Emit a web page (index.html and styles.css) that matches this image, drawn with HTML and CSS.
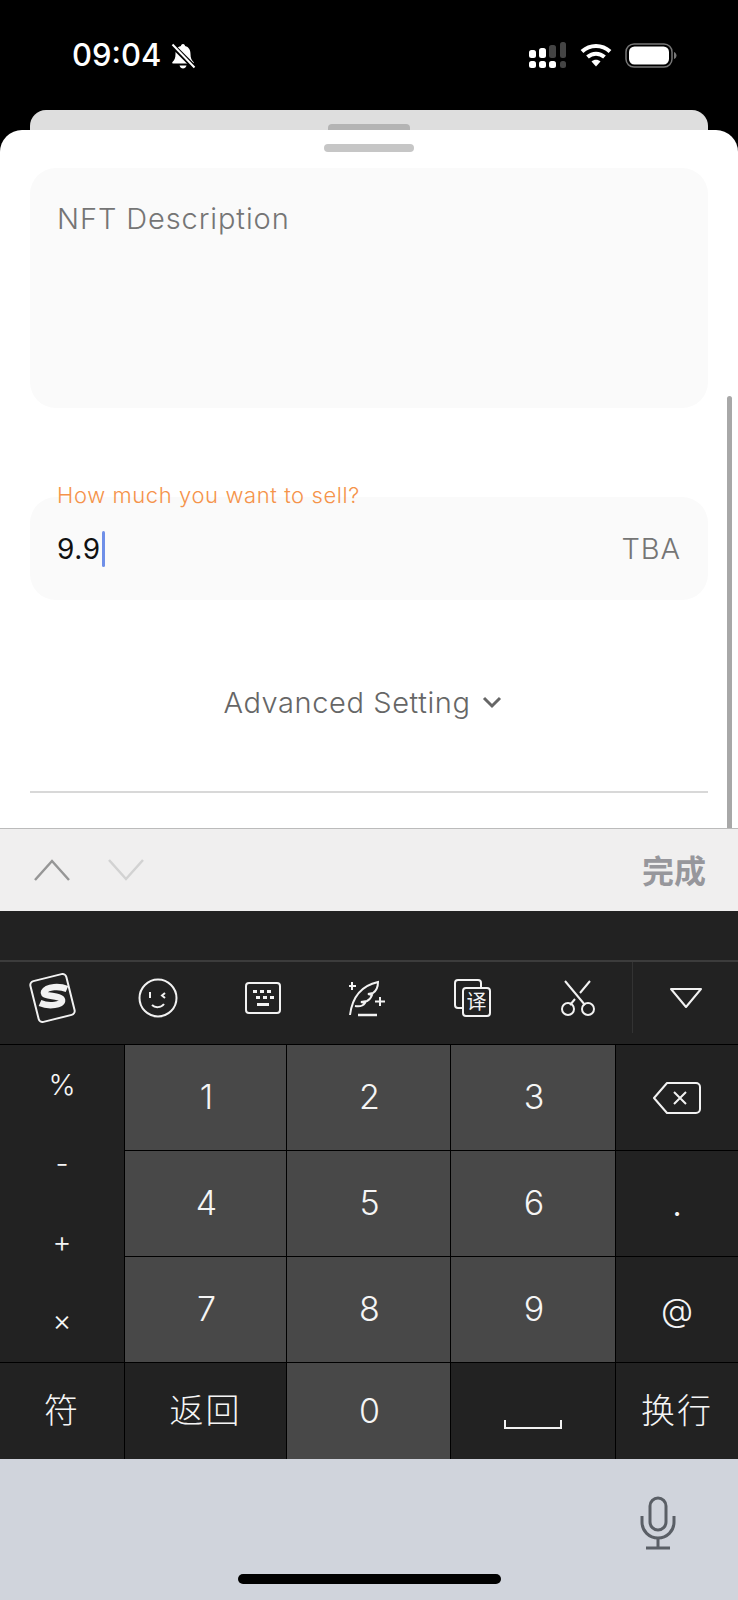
FILE: index.html
```html
<!DOCTYPE html>
<html lang="en">
<head>
    <meta charset="UTF-8">
    <meta name="viewport" content="width=device-width, initial-scale=1.0">
    <title>Create NFT</title>
    <link rel="stylesheet" href="styles.css">
</head>
<body>
    <div class="status-bar">
        <span class="time">09:04</span>
        <svg class="bell" width="26" height="26" viewBox="0 0 26 26">
            <path d="M13 1c-1.400 0-2 1-2 2-4 1-5.500 4-5.500 8 0 4-1 6-3 8-.6.8-.2 1.500.8 1.500h19.400c1-.1 1.400-.8.800-1.500-2-2-3-4-3-8 0-4-1.500-7-5.500-8 0-1-.6-2-2-2z" fill="#fff"/>
            <path d="M9.500 22.500c.5 2 2 3 3.500 3s3-1 3.500-3z" fill="#fff"/>
            <path d="M1.500 1.500l23 23" stroke="#000" stroke-width="5"/>
            <path d="M2.500 1.500l22 23" stroke="#fff" stroke-width="2"/>
        </svg>
        <div class="status-icons">
            <svg width="38" height="27" viewBox="0 0 38 27">
                <rect x="0" y="8" width="7" height="8" rx="2.500" fill="#fff"/>
                <rect x="10" y="6" width="7" height="10" rx="2.500" fill="#fff"/>
                <rect x="20" y="3" width="7" height="13" rx="2.500" fill="#444"/>
                <rect x="31" y="0" width="6" height="16" rx="2.500" fill="#444"/>
                <rect x="0" y="19" width="7" height="7" rx="2.500" fill="#fff"/>
                <rect x="10" y="19" width="7" height="7" rx="2.500" fill="#fff"/>
                <rect x="20" y="19" width="7" height="7" rx="2.500" fill="#fff"/>
                <rect x="31" y="19" width="6" height="7" rx="2.500" fill="#444"/>
            </svg>
            <svg width="32" height="24" viewBox="0 0 32 24">
                <path d="M2 8.500c8-7.500 20-7.500 28 0" fill="none" stroke="#fff" stroke-width="4"/>
                <path d="M7.500 14c5-4.500 12-4.500 17 0" fill="none" stroke="#fff" stroke-width="4"/>
                <path d="M11.500 18.500c2.500-2.500 6.500-2.500 9 0L16 23.500z" fill="#fff"/>
            </svg>
            <svg width="52" height="25" viewBox="0 0 52 25">
                <rect x="1" y="1" width="46" height="23" rx="8" fill="none" stroke="#777" stroke-width="1.500"/>
                <rect x="4" y="3.500" width="40" height="18" rx="5.500" fill="#fff"/>
                <path d="M49 9c1.500.5 2.500 2 2.500 3.500S50.500 15.500 49 16z" fill="#777"/>
            </svg>
        </div>
    </div>

    <div class="back-sheet"><div class="back-handle"></div></div>

    <div class="sheet">
        <div class="handle"></div>
        <div class="field description">NFT Description</div>
        <div class="field amount">
            <label class="float-label">How much you want to sell?</label>
            <span class="amount-value">9.9</span><span class="caret"></span>
            <span class="unit">TBA</span>
        </div>
        <div class="advanced">
            Advanced Setting
            <svg width="20" height="14" viewBox="0 0 20 14"><path d="M2 3l8 8 8-8" fill="none" stroke="#666" stroke-width="3"/></svg>
        </div>
        <div class="divider"></div>
        <div class="scrollbar"></div>
    </div>

    <div class="accessory">
        <svg width="36" height="22" viewBox="0 0 36 22"><path d="M1 21L18 2l17 19" fill="none" stroke="#969696" stroke-width="2.500"/></svg>
        <svg class="next" width="36" height="22" viewBox="0 0 36 22"><path d="M1 1l17 19L35 1" fill="none" stroke="#d2d2d2" stroke-width="2.500"/></svg>
        <span class="done">完成</span>
    </div>

    <div class="keyboard">
        <div class="candidates"></div>
        <div class="toolbar">
            <div class="tool">
                <svg width="52" height="50" viewBox="0 0 52 50">
                    <rect x="7" y="4" width="37" height="42" rx="4" transform="rotate(-14 25.500 25)" fill="none" stroke="#f2f2f2" stroke-width="2"/>
                    <path d="M40 16c-7-3-20-3-23 3-2 5 17 3 18 8 1 5-13 7-22 3" fill="none" stroke="#f2f2f2" stroke-width="6.500"/>
                </svg>
            </div>
            <div class="tool">
                <svg width="40" height="40" viewBox="0 0 40 40" fill="none" stroke="#f2f2f2" stroke-width="2">
                    <circle cx="20" cy="20" r="18.500"/>
                    <path d="M12 14v6M27 15l-3 2.500 3 2.500"/>
                    <path d="M14 27c3 3 9 3 12-1"/>
                </svg>
            </div>
            <div class="tool">
                <svg width="36" height="32" viewBox="0 0 36 32">
                    <rect x="1" y="1" width="34" height="30" rx="3" fill="none" stroke="#f2f2f2" stroke-width="2"/>
                    <path d="M8 8h4v3H8zM15 8h4v3h-4zM22 8h4v3h-4zM11 14h4v3h-4zM18 14h4v3h-4zM25 14h4v3h-4zM12 21h12v3H12z" fill="#f2f2f2"/>
                </svg>
            </div>
            <div class="tool">
                <svg width="38" height="38" viewBox="0 0 38 38" fill="none" stroke="#f2f2f2" stroke-width="2">
                    <path d="M1 36C3 20 11 7 29 3c0 6-2 9-5 11l-5 1 4 1c-1 3-3 5-5 6l-6 1 4 1c-2 3-5 4-10 3"/>
                    <path d="M9 36h19" stroke-width="2.500"/>
                    <path d="M3 3v8M-1 7h8M31 18v9M26 22.500h10"/>
                </svg>
            </div>
            <div class="tool">
                <svg width="38" height="38" viewBox="0 0 38 38" fill="none" stroke="#f2f2f2" stroke-width="2">
                    <path d="M8 29H4a3 3 0 0 1-3-3V4a3 3 0 0 1 3-3h20a3 3 0 0 1 3 3v4"/>
                    <rect x="9" y="9" width="27" height="28" rx="3"/>
                    <text class="tool-char" x="22.500" y="30">译</text>
                </svg>
            </div>
            <div class="tool">
                <svg width="36" height="36" viewBox="0 0 36 36" fill="none" stroke="#f2f2f2" stroke-width="2">
                    <path d="M5 1l20 24M30 1L20 13M15 19l-5 6"/>
                    <circle cx="8" cy="29" r="6"/>
                    <circle cx="28" cy="29" r="6"/>
                </svg>
            </div>
            <div class="tool last">
                <svg width="36" height="22" viewBox="0 0 36 22"><path d="M3 2h30L18 20z" fill="none" stroke="#f2f2f2" stroke-width="2" stroke-linejoin="round"/></svg>
            </div>
        </div>

        <div class="keys">
            <div class="key symbols">
                <span class="sym">%</span>
                <span class="sym">-</span>
                <span class="sym">+</span>
                <span class="sym">×</span>
            </div>
            <div class="key num">1</div>
            <div class="key num">2</div>
            <div class="key num">3</div>
            <div class="key dark">
                <svg width="48" height="32" viewBox="0 0 48 32" fill="none" stroke="#f2f2f2" stroke-width="2">
                    <path d="M14 1h29a4 4 0 0 1 4 4v22a4 4 0 0 1-4 4H14L1 16z" stroke-linejoin="round"/>
                    <path d="M21 10l12 12M33 10L21 22"/>
                </svg>
            </div>
            <div class="key num">4</div>
            <div class="key num">5</div>
            <div class="key num">6</div>
            <div class="key dark dot">.</div>
            <div class="key num">7</div>
            <div class="key num">8</div>
            <div class="key num">9</div>
            <div class="key dark at">@</div>
            <div class="key dark cjk">符</div>
            <div class="key dark cjk">返回</div>
            <div class="key num">0</div>
            <div class="key dark space">
                <svg width="58" height="10" viewBox="0 0 58 10"><path d="M1 0v8h56V0" fill="none" stroke="#f2f2f2" stroke-width="2"/></svg>
            </div>
            <div class="key dark cjk">换行</div>
        </div>
    </div>

    <div class="bottom-bar">
        <svg class="mic" width="36" height="54" viewBox="0 0 36 54" fill="none" stroke="#5a5f66" stroke-width="3">
            <rect x="10" y="2" width="16" height="32" rx="8"/>
            <path d="M2 20v6c0 9 7 16 16 16s16-7 16-16v-6"/>
            <path d="M18 42v9M6 52h24"/>
        </svg>
        <div class="home-indicator"></div>
    </div>
</body>
</html>
```

FILE: styles.css
```css
body {
    margin: 0;
    width: 738px;
    height: 1600px;
    overflow: hidden;
    background-color: #000;
    font-family: Inter, 'Noto Sans CJK SC', sans-serif;
}

/* status bar */
.status-bar {
    display: flex;
    align-items: center;
    height: 110px;
    padding: 0 61px 0 72px;
    box-sizing: border-box;
    color: white;
}

.time {
    font-size: 31px;
    font-weight: 500;
    margin-top: -2px;
}

.bell {
    margin-left: 9px;
    margin-top: 2px;
}

.status-icons {
    display: flex;
    align-items: center;
    gap: 13px;
    margin-left: auto;
}

/* sheets */
.back-sheet {
    height: 20px;
    margin: 0 30px;
    background: #dedede;
    border-radius: 16px 16px 0 0;
    display: flex;
    justify-content: center;
    align-items: flex-end;
}

.back-handle {
    width: 82px;
    height: 6px;
    background: #b4b4b4;
    border-radius: 4px 4px 0 0;
}

.sheet {
    position: relative;
    height: 698px;
    padding: 14px 30px 0;
    box-sizing: border-box;
    background: white;
    border-radius: 22px 22px 0 0;
    overflow: hidden;
}

.handle {
    width: 90px;
    height: 8px;
    margin: 0 auto 16px;
    background: #c6c6c6;
    border-radius: 4px;
}

.field {
    background: #fafafa;
    border-radius: 26px;
    color: #757575;
    font-size: 29px;
    font-weight: 300;
    letter-spacing: 0.9px;
}

.description {
    height: 240px;
    padding: 33px 27px;
    box-sizing: border-box;
    line-height: 36px;
}

.amount {
    position: relative;
    display: flex;
    align-items: center;
    height: 103px;
    margin-top: 89px;
    padding: 0 27px;
    box-sizing: border-box;
}

.float-label {
    position: absolute;
    left: 27px;
    top: -16px;
    color: #f5934a;
    font-size: 22px;
    letter-spacing: 0.6px;
    line-height: 28px;
}

.amount-value {
    color: #111;
    font-size: 28px;
    font-weight: 400;
    letter-spacing: 0.6px;
}

.caret {
    width: 3px;
    height: 36px;
    margin-left: 1px;
    background: #6f8fe8;
    border-radius: 2px;
}

.unit {
    margin-left: auto;
}

.advanced {
    display: flex;
    justify-content: center;
    align-items: center;
    gap: 11px;
    height: 36px;
    margin-top: 84px;
    margin-bottom: 1px;
    padding-right: 13px;
    color: #666;
    font-size: 29px;
    font-weight: 300;
    letter-spacing: 0.6px;
}

.divider {
    height: 2px;
    margin-top: 71px;
    background: #d8d8d8;
}

.scrollbar {
    position: absolute;
    right: 6px;
    top: 266px;
    bottom: 0;
    width: 5px;
    background: #a8a8a8;
    border-radius: 3px 3px 0 0;
}

/* toolbar above the keyboard */
.accessory {
    display: flex;
    align-items: center;
    height: 83px;
    padding: 0 32px 0 34px;
    box-sizing: border-box;
    background: #f0efef;
    border-top: 1px solid #bbb;
}

.next {
    margin-left: 38px;
}

.done {
    margin-left: auto;
    margin-top: -3px;
    color: #97979c;
    font-size: 32px;
    font-weight: 700;
}

/* keyboard */
.keyboard {
    background: #222;
}

.candidates {
    height: 51px;
    border-bottom: 2px solid #3c3c3c;
    box-sizing: border-box;
}

.toolbar {
    display: flex;
    height: 82px;
    padding-bottom: 11px;
    box-sizing: border-box;
}

.tool {
    flex: 0 0 105px;
    display: flex;
    justify-content: center;
    align-items: center;
}

.tool.last {
    flex: 1;
    margin-left: 2px;
    border-left: 1px solid #333;
}

.tool-char {
    fill: #f2f2f2;
    stroke: none;
    font-size: 20px;
    text-anchor: middle;
}

.keys {
    display: grid;
    grid-template-columns: 124px 161px 163px 164px 122px;
    grid-template-rows: 105px 105px 105px 96px;
    gap: 1px;
    background: #000;
    border-top: 1px solid #000;
    color: #f5f5f5;
}

.key {
    display: flex;
    justify-content: center;
    align-items: center;
    font-size: 34px;
    font-weight: 300;
    background: #484848;
}

.num {
    padding: 0 0 2px 2px;
}

.dark {
    background: #222;
}

.symbols {
    grid-row: span 3;
    flex-direction: column;
    padding-bottom: 2px;
    background: #222;
}

.sym {
    flex: 1;
    display: flex;
    align-items: center;
    font-size: 29px;
}

.dot {
    padding-top: 2px;
    box-sizing: border-box;
    font-size: 30px;
    font-weight: 400;
}

.at {
    font-size: 33px;
}

.cjk {
    padding-bottom: 5px;
    box-sizing: border-box;
    font-size: 34px;
    letter-spacing: 2px;
}

.space {
    align-items: flex-end;
    padding-bottom: 29px;
    box-sizing: border-box;
}

/* system bar under the keyboard */
.bottom-bar {
    position: relative;
    height: 141px;
    background: #d0d4dc;
}

.mic {
    position: absolute;
    left: 640px;
    top: 37px;
}

.home-indicator {
    position: absolute;
    left: 238px;
    top: 115px;
    width: 263px;
    height: 10px;
    background: #000;
    border-radius: 5px;
}
```
